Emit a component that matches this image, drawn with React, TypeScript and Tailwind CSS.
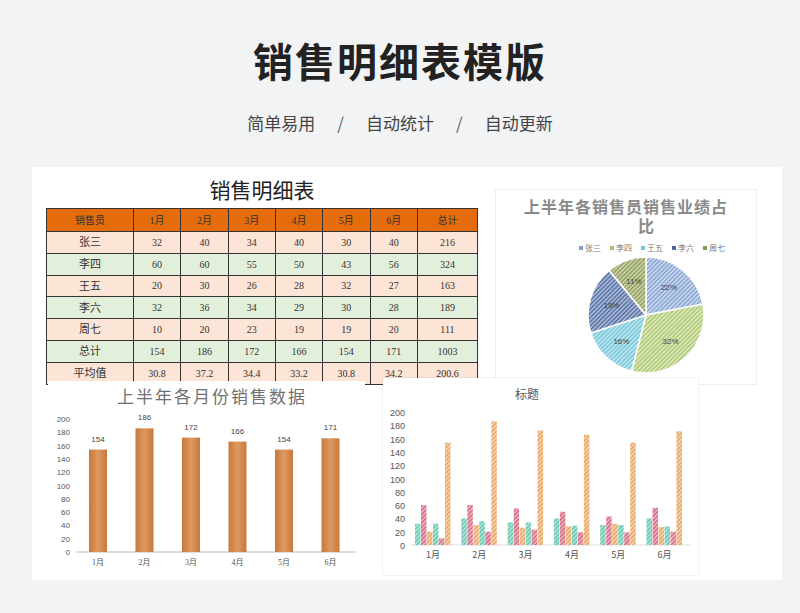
import React from "react";

const months = ["1月", "2月", "3月", "4月", "5月", "6月"];
const rows: [string, string[], string][] = [
  ["张三", ["32", "40", "34", "40", "30", "40", "216"], "bg-[#fce4d6]"],
  ["李四", ["60", "60", "55", "50", "43", "56", "324"], "bg-[#e2efda]"],
  ["王五", ["20", "30", "26", "28", "32", "27", "163"], "bg-[#fce4d6]"],
  ["李六", ["32", "36", "34", "29", "30", "28", "189"], "bg-[#e2efda]"],
  ["周七", ["10", "20", "23", "19", "19", "20", "111"], "bg-[#fce4d6]"],
  ["总计", ["154", "186", "172", "166", "154", "171", "1003"], "bg-[#e2efda]"],
  ["平均值", ["30.8", "37.2", "34.4", "33.2", "30.8", "34.2", "200.6"], "bg-[#fce4d6]"],
];
const serif = { fontFamily: '"Liberation Serif","Noto Sans CJK SC",serif' };
const totals = [154, 186, 172, 166, 154, 171];
const series = [
  [32, 40, 34, 40, 30, 40],
  [60, 60, 55, 50, 43, 56],
  [20, 30, 26, 28, 32, 27],
  [32, 36, 34, 29, 30, 28],
  [10, 20, 23, 19, 19, 20],
  totals,
];
const sColors = ["url(#pt)", "url(#pp)", "url(#po)", "url(#pt)", "url(#pp)", "url(#po)"];

function Pat({ id, c, bg }: { id: string; c: string; bg: string }) {
  return (
    <pattern id={id} width="3" height="3" patternUnits="userSpaceOnUse" patternTransform="rotate(45)">
      <rect width="3" height="3" fill={bg} />
      <rect width="1.5" height="3" fill={c} />
    </pattern>
  );
}

function LeftChart() {
  const y0 = 171, h = 133;
  return (
    <svg width="317" height="197" className="block">
      <defs>
        <linearGradient id="gb" x1="0" x2="1">
          <stop offset="0" stopColor="#c9773a" />
          <stop offset="0.5" stopColor="#dc9a62" />
          <stop offset="1" stopColor="#c9773a" />
        </linearGradient>
      </defs>
      <text x="164" y="22" textAnchor="middle" fontSize="17" fill="#707070" style={serif} letterSpacing="2">上半年各月份销售数据</text>
      {[0, 20, 40, 60, 80, 100, 120, 140, 160, 180, 200].map((v) => (
        <text key={v} x="22" y={y0 - (v / 200) * h + 3} textAnchor="end" fontSize="8" fill="#555" fontFamily="Liberation Sans">{v}</text>
      ))}
      <line x1="28" x2="308" y1={y0} y2={y0} stroke="#bbb" />
      {totals.map((v, i) => {
        const cx = 50 + i * 46.5, bh = (v / 200) * h;
        return (
          <g key={i}>
            <rect x={cx - 9} y={y0 - bh} width="18" height={bh} fill="url(#gb)" />
            <text x={cx} y={y0 - bh - 8} textAnchor="middle" fontSize="8" fill="#444" fontFamily="Liberation Sans">{v}</text>
            <text x={cx} y={y0 + 13} textAnchor="middle" fontSize="8" fill="#555" style={serif}>{months[i]}</text>
          </g>
        );
      })}
    </svg>
  );
}

function RightChart() {
  const y0 = 167, h = 133;
  return (
    <svg width="315" height="197" className="block">
      <defs>
        <Pat id="pt" c="#5cc4ad" bg="#bfe8dd" />
        <Pat id="pp" c="#d45f7a" bg="#f0c0cb" />
        <Pat id="po" c="#e9a05a" bg="#f7d9bb" />
      </defs>
      <text x="144" y="21" textAnchor="middle" fontSize="12" fill="#555" fontFamily="Noto Sans CJK SC">标题</text>
      {[0, 20, 40, 60, 80, 100, 120, 140, 160, 180, 200].map((v) => (
        <text key={v} x="22" y={y0 - (v / 200) * h + 4} textAnchor="end" fontSize="9" fill="#555" fontFamily="Liberation Sans">{v}</text>
      ))}
      <line x1="28" x2="308" y1={y0} y2={y0} stroke="#ddd" />
      {months.map((m, i) => {
        const cx = 50 + i * 46.3;
        return (
          <g key={i}>
            {series.map((s, j) => {
              const bh = (s[i] / 200) * h;
              return <rect key={j} x={cx - 18 + j * 6} y={y0 - bh} width="5.5" height={bh} fill={sColors[j]} />;
            })}
            <text x={cx} y={y0 + 13} textAnchor="middle" fontSize="9" fill="#555" fontFamily="Noto Sans CJK SC">{m}</text>
          </g>
        );
      })}
    </svg>
  );
}

function Pie() {
  const cx = 150, cy = 125, r = 58;
  const data = [
    [22, "url(#q1)", "22%"],
    [32, "url(#q2)", "32%"],
    [16, "url(#q3)", "16%"],
    [19, "url(#q4)", "19%"],
    [11, "url(#q5)", "11%"],
  ] as [number, string, string][];
  let acc = 0;
  return (
    <svg width="260" height="194" className="block">
      <defs>
        <Pat id="q1" c="#7f9fcf" bg="#d6e1f2" />
        <Pat id="q2" c="#a9c46a" bg="#e4eecb" />
        <Pat id="q3" c="#6cc3d6" bg="#cdebf2" />
        <Pat id="q4" c="#4f6a9e" bg="#b8c5df" />
        <Pat id="q5" c="#8a9a55" bg="#d3dab8" />
      </defs>
      <text x="130" y="23" textAnchor="middle" fontSize="16" fontWeight="bold" fill="#8a8a8a" style={serif} letterSpacing="1">上半年各销售员销售业绩占</text>
      <text x="150" y="42" textAnchor="middle" fontSize="16" fontWeight="bold" fill="#8a8a8a" style={serif}>比</text>
      {[["张三", "#7f9fcf"], ["李四", "#a9c46a"], ["王五", "#6cc3d6"], ["李六", "#4f6a9e"], ["周七", "#8a9a55"]].map(([n, c], i) => (
        <g key={n}>
          <rect x={83 + i * 31} y={56} width="4" height="4" fill={c} />
          <text x={89 + i * 31} y={61} fontSize="8" fill="#777" style={serif}>{n}</text>
        </g>
      ))}
      {data.map(([p, fill, label], i) => {
        const a0 = (acc / 100) * Math.PI * 2;
        acc += p;
        const a1 = (acc / 100) * Math.PI * 2;
        const am = (a0 + a1) / 2;
        const x0 = cx + r * Math.sin(a0), y0 = cy - r * Math.cos(a0);
        const x1 = cx + r * Math.sin(a1), y1 = cy - r * Math.cos(a1);
        return (
          <g key={i}>
            <path d={`M${cx},${cy} L${x0},${y0} A${r},${r} 0 ${p > 50 ? 1 : 0} 1 ${x1},${y1} Z`} fill={fill} stroke="#fff" strokeWidth="1.5" />
            <text x={cx + r * 0.62 * Math.sin(am)} y={cy - r * 0.62 * Math.cos(am) + 3} textAnchor="middle" fontSize="8" fill="#444" fontFamily="Liberation Sans">{label}</text>
          </g>
        );
      })}
    </svg>
  );
}

export default function App() {
  return (
    <div className="w-[800px] h-[613px] bg-[#f2f3f5] flex flex-col items-center" style={{ fontFamily: '"Noto Sans CJK SC",sans-serif' }}>
      <h1 className="mt-[34px] text-[40px] leading-[52px] font-bold text-[#222] tracking-[2px]">销售明细表模版</h1>
      <div className="mt-[25px] flex gap-[22px] text-[17px] text-[#444] leading-6">
        <span>简单易用</span><span className="text-[#666]">/</span><span>自动统计</span><span className="text-[#666]">/</span><span>自动更新</span>
      </div>
      <div className="mt-[32px] self-start ml-[32px] w-[750px] h-[413px] bg-white relative">
        <div className="absolute left-[14px] top-[10px] w-[432px]">
          <div className="text-center text-[21px] leading-[28px] text-[#222]" style={serif}>销售明细表</div>
          <table className="mt-[3px] w-full border-collapse text-[10px] text-[#333]" style={serif}>
            <tbody>
              <tr className="bg-[#e46c0a] text-[#333] h-[23px]">
                {["销售员", ...months, "总计"].map((h) => (
                  <td key={h} className="border border-[#333] text-center">{h}</td>
                ))}
              </tr>
              {rows.map(([n, v, bg]) => (
                <tr key={n} className={`${bg} h-[21.8px]`}>
                  <td className="border border-[#333] text-center text-[11px]">{n}</td>
                  {v.map((x, i) => (
                    <td key={i} className="border border-[#333] text-center">{x}</td>
                  ))}
                </tr>
              ))}
            </tbody>
          </table>
        </div>
        <div className="absolute left-[463px] top-[22px] border border-[#eee] bg-white"><Pie /></div>
        <div className="absolute left-[16px] top-[214px] bg-white"><LeftChart /></div>
        <div className="absolute left-[351px] top-[211px] bg-white shadow-[0_0_2px_rgba(0,0,0,0.15)]"><RightChart /></div>
      </div>
    </div>
  );
}
